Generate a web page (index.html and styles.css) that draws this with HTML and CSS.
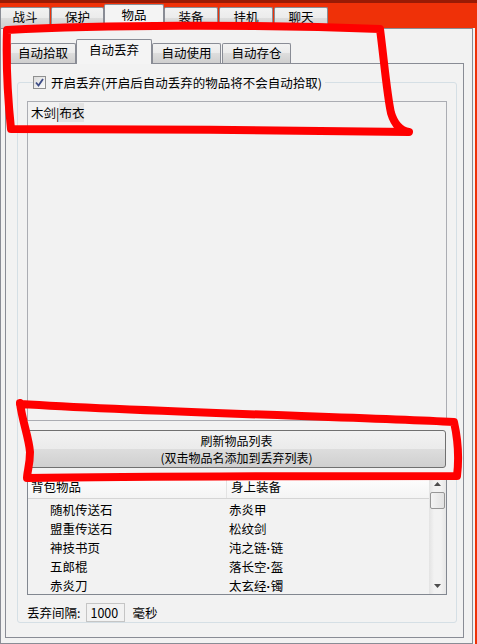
FILE: index.html
```html
<!DOCTYPE html>
<html lang="zh">
<head>
<meta charset="utf-8">
<title>物品</title>
<link rel="stylesheet" href="styles.css">
</head>
<body>
<div class="topline"></div>
<div class="tabs">
  <div class="tab t1">战斗</div>
  <div class="tab t2">保护</div>
  <div class="tab t3 sel">物品</div>
  <div class="tab t4">装备</div>
  <div class="tab t5">挂机</div>
  <div class="tab t6">聊天</div>
</div>
<div class="outer">
  <div class="panel">
    <div class="itabs">
      <div class="itab i1">自动拾取</div>
      <div class="itab i2 sel">自动丢弃</div>
      <div class="itab i3">自动使用</div>
      <div class="itab i4">自动存仓</div>
    </div>
    <div class="ipanel">
      <fieldset class="group">
        <legend class="legend">
          <span class="checkbox">
            <svg width="11" height="11" viewBox="0 0 11 11"><path d="M2 5.5 L4.5 8.5 L9 2" fill="none" stroke="#3d4d86" stroke-width="1.8"/></svg>
          </span>
          <span class="legend-text">开启丢弃(开启后自动丢弃的物品将不会自动拾取)</span>
        </legend>
        <div class="textbox"><span>木剑|</span><span class="selected">布衣</span></div>
        <button class="btn"><span class="btn-line">刷新物品列表</span><span class="btn-line">(双击物品名添加到丢弃列表)</span></button>
        <div class="listview">
          <div class="lv-main">
            <div class="lv-head">
              <div class="c1">背包物品</div>
              <div class="c2">身上装备</div>
            </div>
            <div class="lv-rows">
              <div class="row"><div class="c1">随机传送石</div><div class="c2">赤炎甲</div></div>
              <div class="row"><div class="c1">盟重传送石</div><div class="c2">松纹剑</div></div>
              <div class="row"><div class="c1">神技书页</div><div class="c2">沌之链<span class="dot">·</span>链</div></div>
              <div class="row"><div class="c1">五郎棍</div><div class="c2">落长空<span class="dot">·</span>盔</div></div>
              <div class="row"><div class="c1">赤炎刀</div><div class="c2">太玄经<span class="dot">·</span>镯</div></div>
            </div>
          </div>
          <div class="scrollbar">
            <div class="sb-btn"><svg width="7" height="4" viewBox="0 0 7 4"><path d="M0 4 L3.5 0 L7 4 Z" fill="#4d4d4d"/></svg></div>
            <div class="sb-thumb"></div>
            <div class="sb-track"></div>
            <div class="sb-btn"><svg width="7" height="4" viewBox="0 0 7 4"><path d="M0 0 L3.5 4 L7 0 Z" fill="#4d4d4d"/></svg></div>
          </div>
        </div>
        <div class="footer">
          <span>丢弃间隔:</span>
          <span class="input">1000</span>
          <span>毫秒</span>
        </div>
      </fieldset>
    </div>
  </div>
  <div class="strip"></div>
</div>
<svg class="scribble" width="477" height="644" viewBox="0 0 477 644">
  <path d="M7 30 C100 25 250 24 380 29 C384 60 387 95 391 113 C395 126 402 131 409 132 C300 130 120 129 11 129 C8 100 6 60 7 30 Z" fill="none" stroke="#ff0000" stroke-width="8" stroke-linejoin="round" stroke-linecap="round"/>
  <path d="M20 403 C22 420 29 438 30 452 C30 465 27 472 27 478 C150 476 350 476 457 476 C459 460 458 440 454 422 C350 417 150 412 20 404" fill="none" stroke="#ff0000" stroke-width="8" stroke-linejoin="round" stroke-linecap="round"/>
</svg>
</body>
</html>
```
FILE: styles.css
```css
* { box-sizing: border-box; }
html, body { margin: 0; padding: 0; }
body {
  width: 477px;
  height: 644px;
  overflow: hidden;
  position: relative;
  background: #ef3108;
  font-family: "Noto Sans CJK SC", "Noto Sans", sans-serif;
  font-size: 12.5px;
  color: #000;
}
.topline { height: 3px; background: #991b05; }

.tabs { display: flex; align-items: flex-end; height: 25px; }
.tab, .itab {
  height: 21px;
  border: 1px solid #898c95;
  border-bottom: none;
  border-radius: 2px 2px 0 0;
  background: linear-gradient(#f2f2f2, #ebebeb 50%, #dddddd 50%, #cfcfcf);
  display: flex;
  align-items: center;
  justify-content: center;
  line-height: 1;
  padding-bottom: 1px;
}
.tab.sel, .itab.sel {
  height: 25px;
  margin-bottom: -1px;
  background: #f4f4f4;
  position: relative;
  z-index: 2;
  padding-bottom: 3px;
}
.t1 { width: 50px; margin-right: 1px; }
.t2 { width: 53px; }
.t3 { width: 60px; }
.t4 { width: 54px; margin-right: 1px; }
.t5 { width: 54px; margin-right: 1px; }
.t6 { width: 54px; }

.outer { display: flex; }
.panel {
  width: 473px;
  border: 1px solid #898c95;
  background: #f2f2f2;
  padding: 10px 8px 5px 4px;
}
.strip { width: 2px; background: #f2f2f2; }

.itabs { display: flex; align-items: flex-end; height: 24px; padding-left: 5px; }
.itab { height: 20px; }
.itab.sel { height: 25px; }
.i1 { width: 66px; }
.i2 { width: 76px; }
.i3 { width: 69px; margin-right: 1px; }
.i4 { width: 69px; }

.ipanel {
  width: 459px;
  border: 1px solid #898c95;
  background: #f2f2f2;
  padding: 12px 6px 14px 11px;
}

.group {
  width: 440px;
  margin: 0;
  border: 1px solid #d5dfe5;
  border-radius: 3px;
  padding: 0 9px 0 9px;
}
.legend {
  margin-left: 6px;
  padding: 0 3px 0 0;
  height: 13px;
  display: flex;
  align-items: center;
  line-height: 13px;
}
.checkbox {
  width: 13px;
  height: 13px;
  border: 1px solid #8e8f8f;
  background: linear-gradient(135deg, #dcdcdc, #fbfbfb);
  display: flex;
  align-items: center;
  justify-content: center;
  margin-right: 5px;
}
.checkbox svg { display: block; }

.textbox {
  margin-top: 12px;
  width: 420px;
  height: 320px;
  border: 1px solid #abadb3;
  background: #f2f2f2;
  padding: 2px 3px;
  line-height: 18px;
}
.selected { background: #e3e3e3; }

.btn {
  display: flex;
  flex-direction: column;
  align-items: center;
  justify-content: center;
  margin-top: 9px;
  width: 419px;
  height: 38px;
  border: 1px solid #707070;
  border-radius: 3px;
  background: linear-gradient(#f2f2f2, #ebebeb 50%, #dddddd 50%, #cfcfcf);
  font: inherit;
  color: #000;
  padding: 0;
}
.btn-line { display: block; height: 17px; line-height: 17px; font-size: 12px; }

.listview {
  margin-top: 6px;
  width: 420px;
  height: 121px;
  border: 1px solid #828790;
  display: flex;
  background: #f2f2f2;
}
.lv-main { flex: 1; overflow: hidden; }
.lv-head {
  display: flex;
  height: 24px;
  border-bottom: 1px solid #d5d5d5;
  background: linear-gradient(#ffffff, #f4f4f4);
  line-height: 23px;
}
.lv-head .c1 { width: 199px; border-right: 1px solid #e3e3e3; padding-left: 3px; }
.lv-head .c2 { padding-left: 4px; }
.lv-rows { padding-top: 1px; }
.row { display: flex; height: 19px; line-height: 19px; }
.row .c1 { width: 200px; padding-left: 22px; }
.row .c2 { padding-left: 1px; }
.dot { font-family: "Liberation Sans", sans-serif; font-weight: bold; }

.scrollbar {
  width: 17px;
  display: flex;
  flex-direction: column;
  background: linear-gradient(90deg, #e3e3e3, #f2f2f2 30%, #f2f2f2 70%, #e6e6e6);
}
.sb-btn { height: 17px; display: flex; align-items: center; justify-content: center; }
.sb-thumb {
  height: 17px;
  margin: 0 1px;
  border: 1px solid #979797;
  border-radius: 2px;
  background: linear-gradient(90deg, #f4f4f4, #e2e2e2);
}
.sb-track { flex: 1; }

.footer {
  margin-top: 8px;
  display: flex;
  align-items: center;
  height: 19px;
}
.input {
  width: 39px;
  height: 19px;
  border: 1px solid #c5c5c5;
  margin: 0 7px 0 6px;
  padding-left: 3px;
  line-height: 17px;
  background: #f2f2f2;
}

.scribble {
  position: absolute;
  left: 0;
  top: 0;
  pointer-events: none;
  z-index: 10;
}
```
